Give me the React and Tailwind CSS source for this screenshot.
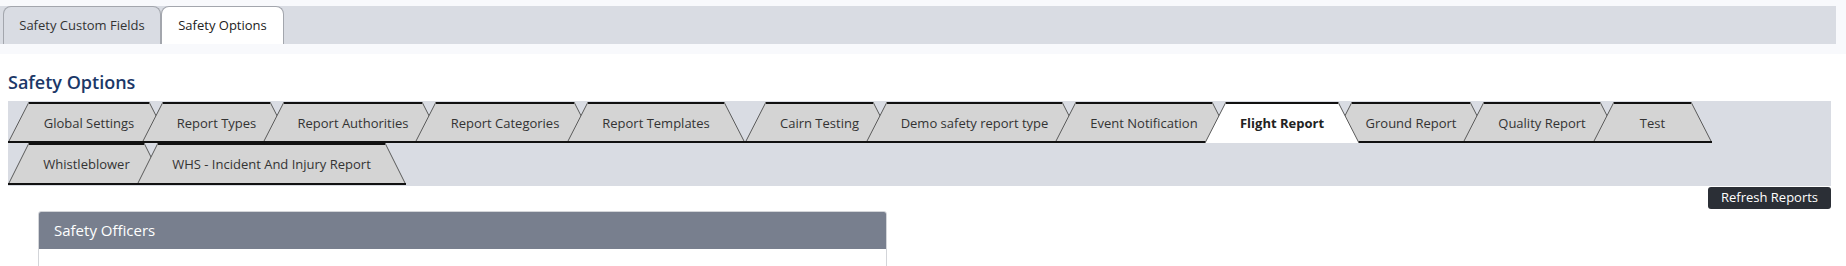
import React from 'react';

const rowOne = [
  { label: 'Global Settings', w: 162, ml: 0 },
  { label: 'Report Types', w: 149, ml: -28 },
  { label: 'Report Authorities', w: 180, ml: -28 },
  { label: 'Report Categories', w: 180, ml: -28 },
  { label: 'Report Templates', w: 178, ml: -28 },
  { label: 'Cairn Testing', w: 149, ml: 0 },
  { label: 'Demo safety report type', w: 217, ml: -28 },
  { label: 'Event Notification', w: 178, ml: -28 },
  { label: 'Flight Report', w: 154, ml: -28, active: true },
  { label: 'Ground Report', w: 160, ml: -28 },
  { label: 'Quality Report', w: 158, ml: -28 },
  { label: 'Test', w: 119, ml: -28 },
];

const rowTwo = [
  { label: 'Whistleblower', w: 157, ml: 0 },
  { label: 'WHS - Incident And Injury Report', w: 269, ml: -28 },
];

// trapezoid tab, later tabs paint over earlier ones
function SlantTab({ label, w, ml, h, active }) {
  return (
    <div
      className={`relative flex items-center justify-center shrink-0 ${active ? 'z-10' : ''}`}
      style={{ width: w, height: h, marginLeft: ml }}
    >
      <svg className="absolute inset-0" width={w} height={h} viewBox={`0 0 ${w} ${h}`}>
        <polygon
          points={`0,${h} 21,0 ${w - 21},0 ${w},${h}`}
          fill={active ? '#ffffff' : '#d4d4d4'}
        />
        <line x1="0" y1={h} x2="21" y2="0" stroke="#5a5a5a" strokeWidth="1" />
        <line x1={w - 21} y1="0" x2={w} y2={h} stroke="#5a5a5a" strokeWidth="1" />
        <line x1="21" y1="1" x2={w - 21} y2="1" stroke="#111111" strokeWidth="2" />
        {!active && (
          <line x1="0" y1={h - 1} x2={w} y2={h - 1} stroke="#111111" strokeWidth="2" />
        )}
      </svg>
      <span
        className={`relative text-[13px] pt-[2px] ${active ? 'font-bold text-[#222]' : 'text-[#333]'}`}
      >
        {label}
      </span>
    </div>
  );
}

export default function App() {
  return (
    <div className="w-[1846px] h-[266px] overflow-hidden bg-white font-['Open_Sans',sans-serif]">
      {/* top page tabs */}
      <div className="h-[54px] bg-[#f8f9fc] pt-[6px]">
        <div className="flex items-end h-[38px] w-[1836px] bg-[#d9dce3] pl-[3px]">
          <div className="flex items-center justify-center h-[38px] w-[158px] rounded-t-[8px] border border-b-0 border-[#a3a6ad] bg-[#d9dce3] text-[13px] text-[#333]">
            Safety Custom Fields
          </div>
          <div className="flex items-center justify-center h-[38px] w-[123px] rounded-t-[8px] border border-b-0 border-[#a3a6ad] bg-white text-[13px] text-[#222]">
            Safety Options
          </div>
        </div>
      </div>

      <div className="px-[8px]">
        <h1 className="mt-[14px] h-[28px] text-[18px] leading-[28px] font-semibold text-[#1c3868]">
          Safety Options
        </h1>

        <div className="mt-[5px] w-[1823px] bg-[#d9dce3] pt-[1px] pb-[1px]">
          <div className="flex">
            {rowOne.map((t) => (
              <SlantTab key={t.label} {...t} h={41} />
            ))}
          </div>
          <div className="flex">
            {rowTwo.map((t) => (
              <SlantTab key={t.label} {...t} h={42} />
            ))}
          </div>
        </div>

        <div className="flex justify-end w-[1823px] mt-[1px]">
          <button className="h-[22px] w-[123px] rounded-[3px] bg-[#2b2f36] text-[13px] text-white">
            Refresh Reports
          </button>
        </div>

        <div className="ml-[30px] mt-[2px] w-[849px] rounded-t-[3px] border border-[#d3d5d9] bg-white">
          <div className="h-[37px] bg-[#787f8e] px-[15px] flex items-center text-[15px] text-white rounded-t-[2px]">
            Safety Officers
          </div>
          <div className="h-[40px] bg-white"></div>
        </div>
      </div>
    </div>
  );
}
